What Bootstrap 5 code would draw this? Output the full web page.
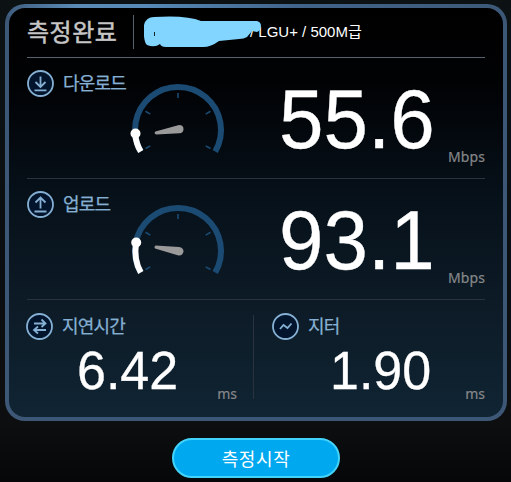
<!DOCTYPE html>
<html lang="ko">
<head>
<meta charset="utf-8">
<meta name="viewport" content="width=device-width, initial-scale=1">
<title>속도 측정</title>
<link href="https://cdn.jsdelivr.net/npm/bootstrap@5.3.0/dist/css/bootstrap.min.css" rel="stylesheet">
<style>
body{height:482px;overflow:hidden;background:linear-gradient(#0c1214,#0b0f11 50%,#0d0e10 88%,#060708);font-family:"Liberation Sans","Noto Sans CJK KR",sans-serif;color:#fff}
.panel{width:502px;height:417px;margin:4px 0 0 5px;border:4px solid transparent;border-radius:20px;
background:linear-gradient(#000 0,#010204 18%,#061019 45%,#0c1a25 70%,#102433 100%) padding-box,linear-gradient(90deg,#3f5c7d,#5b8ab5 14%,#578ab8 28%,#41648a 58%,#3d5877) 0 0/100% 12px no-repeat border-box,linear-gradient(#3d5877,#3d5877) border-box}
.inner{width:458px}
.head-row{height:50px;border-bottom:1px solid #59616d}
.title{width:107px;height:34px;margin-top:7px;border-right:1px solid #59616d;font:400 24px/32px "Noto Sans CJK KR",sans-serif;color:#c6c6c6;letter-spacing:.5px;-webkit-text-stroke:.5px #c6c6c6}
.plan{font-size:15px;line-height:20px;margin:0 0 1px 116px}
.scribble{left:117px;top:8px}
.speed-row{height:121px;border-bottom:1px solid #29323d}
.label-box{width:104px;padding-top:12px;gap:9px}
.label-text{font:400 18px/24px "Noto Sans CJK KR",sans-serif;color:#85b0d4;letter-spacing:-.8px;-webkit-text-stroke:.25px #85b0d4}
.gauge{margin-top:26px}
.big-num{font-size:80px;line-height:80px;transform:scaleY(1.04);transform-origin:50% 72px;margin-top:23px;margin-left:54px;width:160px;-webkit-text-stroke:.3px #fff}
.unit{font:400 14px/18px "Noto Sans",sans-serif;color:#858789;-webkit-text-stroke:.2px #858789}
.unit-speed{margin-top:90px;letter-spacing:.1px}
.bottom-row{height:117px}
.cell-left{width:227px;height:84px;margin-top:15px;border-right:1px solid #29323d}
.cell-right{width:231px;height:84px;margin-top:15px}
.cell-left .label-box{margin:-2px 0 0 -1px}
.cell-right .label-box{margin:-2px 0 0 2px}
.cell-left .unit{margin-right:16px}
.mid-num{font-size:52px;line-height:52px;transform:scaleY(1.03);margin-top:4px;-webkit-text-stroke:.3px #fff}
.latency-num{margin-left:50px}
.jitter-num{margin-left:60px}
.cell-left .unit,.cell-right .unit{margin-bottom:-7px}
.start{width:168px;height:40px;margin:17px 0 0 172px;border:2px solid #42d3fa;background:#00a9ef;font:400 18px/34px "Noto Sans CJK KR",sans-serif;letter-spacing:.6px;color:#fff}
</style>
<script src="https://cdn.jsdelivr.net/npm/bootstrap@5.3.0/dist/js/bootstrap.bundle.min.js"></script>
</head>
<body>
<svg width="0" height="0" class="position-absolute">
<defs>
<g id="dial" fill="none" stroke="#1b4b73">
<path d="M8.800 67.500A43 43 0 1 1 83.200 67.500" stroke-width="6"/>
<path d="M46 9v5M13.500 27.300l4.800 2.800M78.500 27.300l-4.800 2.800M13.500 64.500l4.800-2.600M78.500 64.500l-4.800-2.600" stroke-width="1.600"/>
</g>
</defs>
</svg>
<main class="panel">
<div class="inner mx-auto">
<header class="head-row d-flex position-relative">
<div class="title">측정완료</div>
<div class="plan text-nowrap align-self-center">/ LGU+ / 500M급</div>
<svg class="scribble position-absolute" width="118" height="33" viewBox="144 16 118 33"><path d="M144 25Q146 17 154 17Q187 15 201 21H257Q261 22 261 26Q261 30 257 32L252 31L247 37Q244 39 239 39L219 41Q211 47 203 47H166Q161 47 160 44Q155 48 147 45Q143 42 144 25Z" fill="#82d5ff"/><path d="M154.500 32v4" stroke="#10222e"/></svg>
</header>
<section class="speed-row d-flex">
<div class="label-box d-flex flex-shrink-0 align-items-start text-nowrap">
<svg class="flex-shrink-0" width="27" height="27" viewBox="0 0 27 27" fill="none" stroke="#85b0d4" stroke-width="1.800"><circle cx="13.500" cy="13.500" r="12.500" fill="#03152d"/><path d="M13.500 6.500v10M8.500 12l5 5 5-5M7.500 20.300h12"/></svg>
<span class="label-text">다운로드</span></div>
<svg class="gauge flex-shrink-0" width="94" height="76" viewBox="-1 0 94 76" overflow="visible"><use href="#dial"/><path d="M3.200 50Q4 60 8.800 67.500" fill="none" stroke="#fff" stroke-width="6"/><circle cx="3.500" cy="49.500" r="5" fill="#fff"/><path d="M23.500 47.500L47 41Q51.500 41 51.500 45Q51.500 49 47.500 49.300L24 50.500Q21.500 49 23.500 47.500Z" fill="#9b9a9b"/></svg>
<div class="big-num flex-shrink-0">55.6</div>
<div class="unit unit-speed ms-auto">Mbps</div>
</section>
<section class="speed-row d-flex">
<div class="label-box d-flex flex-shrink-0 align-items-start text-nowrap">
<svg class="flex-shrink-0" width="27" height="27" viewBox="0 0 27 27" fill="none" stroke="#85b0d4" stroke-width="1.800"><circle cx="13.500" cy="13.500" r="12.500" fill="#03152d"/><path d="M13.500 17.500v-11M8.500 11.500l5-5 5 5M7.500 20.500h12"/></svg>
<span class="label-text">업로드</span></div>
<svg class="gauge flex-shrink-0" width="94" height="76" viewBox="-1 0 94 76" overflow="visible"><use href="#dial"/><path d="M4 38Q1.500 55 8.800 67.500" fill="none" stroke="#fff" stroke-width="6"/><circle cx="4.200" cy="37.500" r="5" fill="#fff"/><path d="M23.500 40.500L47 42Q51.500 42.500 51.500 46.500Q50.500 51 46.500 50.500L23 43.500Q21.500 42 23.500 40.500Z" fill="#9b9a9b"/></svg>
<div class="big-num flex-shrink-0">93.1</div>
<div class="unit unit-speed ms-auto">Mbps</div>
</section>
<section class="bottom-row d-flex">
<div class="cell-left">
<div class="label-box d-flex text-nowrap pt-0">
<svg class="flex-shrink-0" width="27" height="27" viewBox="0 0 27 27" fill="none" stroke="#85b0d4" stroke-width="1.800"><circle cx="13.500" cy="13.500" r="12.500" fill="#03152d"/><path d="M8 10.500h11M15.500 6.500l4 4-4 3.500M20 17H8.500M12 13.500L8 17l4 3.500"/></svg>
<span class="label-text">지연시간</span></div>
<div class="d-flex justify-content-between"><div class="mid-num latency-num">6.42</div><div class="unit align-self-end">ms</div></div>
</div>
<div class="cell-right ps-3">
<div class="label-box d-flex text-nowrap pt-0">
<svg class="flex-shrink-0" width="27" height="27" viewBox="0 0 27 27" fill="none" stroke="#85b0d4" stroke-width="1.800"><circle cx="13.500" cy="13.500" r="12.500" fill="#03152d"/><path d="M8 16l3.500-4 4 3 4-4.500"/></svg>
<span class="label-text">지터</span></div>
<div class="d-flex justify-content-between"><div class="mid-num jitter-num">1.90</div><div class="unit align-self-end">ms</div></div>
</div>
</section>
</div>
</main>
<button type="button" class="start btn rounded-pill d-block p-0">측정시작</button>
</body>
</html>
